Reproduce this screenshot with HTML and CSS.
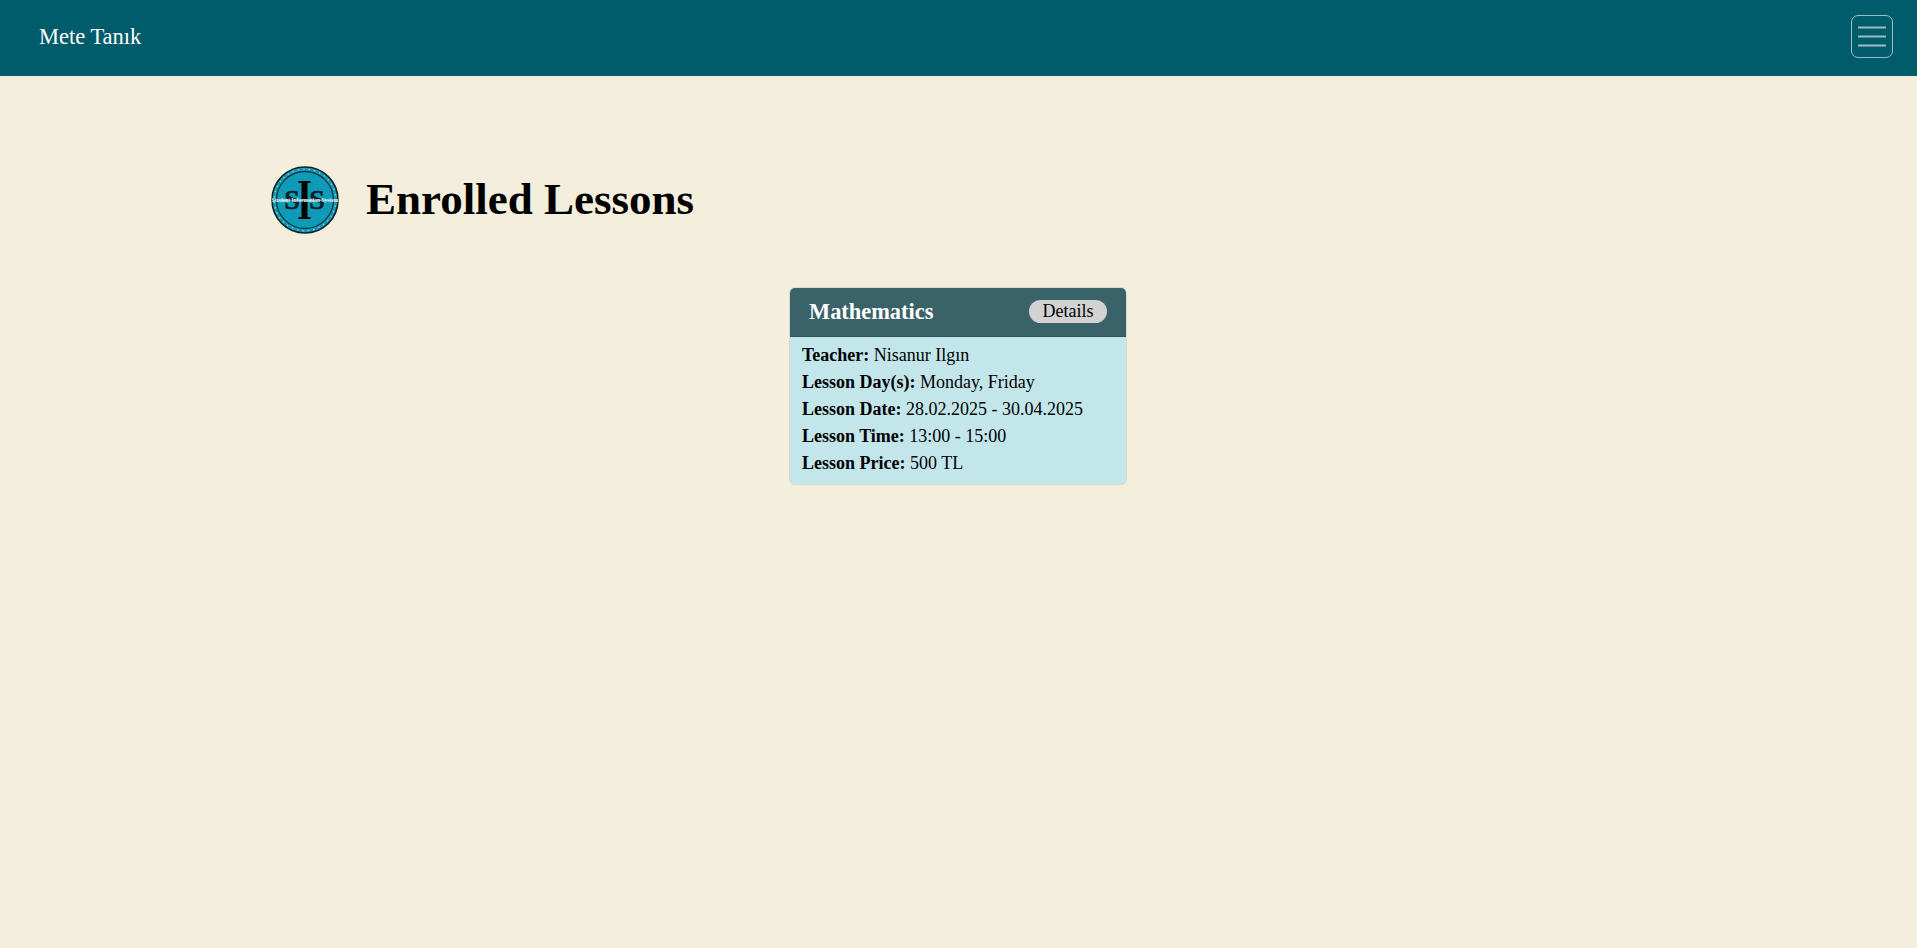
FILE: index.html
```html
<!DOCTYPE html>
<html lang="en">
<head>
    <meta charset="UTF-8">
    <meta name="viewport" content="width=device-width, initial-scale=1.0">
    <title>Enrolled Lessons</title>
    <link rel="stylesheet" href="styles.css">
</head>
<body>
    <nav class="navbar">
        <a class="brand" href="#">Mete Tanık</a>
        <button class="toggler" type="button" aria-label="Menu">
            <svg width="30" height="29" viewBox="0 0 30 29">
                <path d="M1 5.5h28M1 14.5h28M1 23.5h28" stroke="rgba(255,255,255,0.6)" stroke-width="2" fill="none"/>
            </svg>
        </button>
    </nav>

    <main class="content">
        <div class="page-title">
            <svg class="logo" width="68" height="68" viewBox="0 0 68 68">
                <circle cx="34" cy="34" r="33" fill="#0f9bb8" stroke="#14222a" stroke-width="1.6"/>
                <circle cx="34" cy="34" r="30.8" fill="none" stroke="#8fd3e0" stroke-width="1.2" stroke-dasharray="1.5 4"/>
                <circle cx="34" cy="34" r="28.5" fill="none" stroke="#123640" stroke-width="1.3"/>
                <text x="21" y="43" class="logo-s">S</text>
                <text x="46" y="43" class="logo-s">S</text>
                <rect x="30.5" y="15" width="6" height="38" fill="#050505"/>
                <rect x="27.5" y="15" width="12" height="2" fill="#050505"/>
                <rect x="27.5" y="51" width="12" height="2" fill="#050505"/>
                <rect x="8" y="33.8" width="52" height="0.7" fill="#d8eef2"/>
                <text x="34" y="35.8" class="logo-line">Student Information System</text>
            </svg>
            <h1>Enrolled Lessons</h1>
        </div>

        <div class="lessons">
            <div class="card">
                <div class="card-header">
                    <h5>Mathematics</h5>
                    <a class="details" href="#">Details</a>
                </div>
                <div class="card-body">
                    <p><b>Teacher:</b> Nisanur Ilgın</p>
                    <p><b>Lesson Day(s):</b> Monday, Friday</p>
                    <p><b>Lesson Date:</b> 28.02.2025 - 30.04.2025</p>
                    <p><b>Lesson Time:</b> 13:00 - 15:00</p>
                    <p><b>Lesson Price:</b> 500 TL</p>
                </div>
            </div>
        </div>
    </main>
</body>
</html>
```

FILE: styles.css
```css
body {
    font-family: "Liberation Serif", "Times New Roman", serif;
    margin: 0;
    min-height: 948px;
    background: #f3efdc;
    color: #000;
}
.navbar {
    height: 76px;
    box-sizing: border-box;
    padding: 0 24px 3px 39px;
    background: #005c6b;
    display: flex;
    align-items: center;
    justify-content: space-between;
}
.brand {
    color: #fff;
    font-size: 22.5px;
    text-decoration: none;
}
.toggler {
    width: 42px;
    height: 43px;
    padding: 0;
    background: transparent;
    border: 1px solid rgba(255, 255, 255, 0.6);
    border-radius: 7px;
    display: flex;
    align-items: center;
    justify-content: center;
}
.content {
    padding: 90px 0 0 271px;
}
.page-title {
    display: flex;
    align-items: center;
    gap: 27px;
    height: 68px;
    margin-top: -1px;
}
.logo {
    flex: none;
    margin-top: 2px;
}
.logo-s {
    font-family: "Liberation Serif", serif;
    font-size: 28px;
    font-weight: bold;
    fill: #08202a;
    stroke: #08202a;
    stroke-width: 0.5;
    text-anchor: middle;
}
.logo-line {
    font-family: "Liberation Serif", serif;
    font-size: 5.5px;
    font-weight: bold;
    fill: #e4f3f6;
    text-anchor: middle;
}
h1 {
    margin: 0;
    font-size: 45px;
    font-weight: bold;
}
.lessons {
    display: flex;
    justify-content: center;
    margin: 54px 0 0 -272px;
}
.card {
    width: 336px;
    border: 1px solid #d8dbd0;
    border-radius: 6px;
    overflow: hidden;
    background: #c3e6eb;
}
.card-header {
    height: 49px;
    box-sizing: border-box;
    padding: 0 19px 2px 19px;
    background: #3a6269;
    border-bottom: 1px solid #2f555c;
    display: flex;
    align-items: center;
    justify-content: space-between;
}
h5 {
    margin: 2px 0 0;
    color: #fff;
    font-size: 22.4px;
    font-weight: bold;
}
.details {
    width: 78px;
    height: 23px;
    border-radius: 12px;
    background: #d2d2d2;
    color: #000;
    font-size: 18px;
    line-height: 22px;
    text-align: center;
    text-decoration: none;
}
.card-body {
    padding: 5px 12px 7px;
    font-size: 18px;
    line-height: 27px;
}
.card-body p {
    margin: 0;
}
```
